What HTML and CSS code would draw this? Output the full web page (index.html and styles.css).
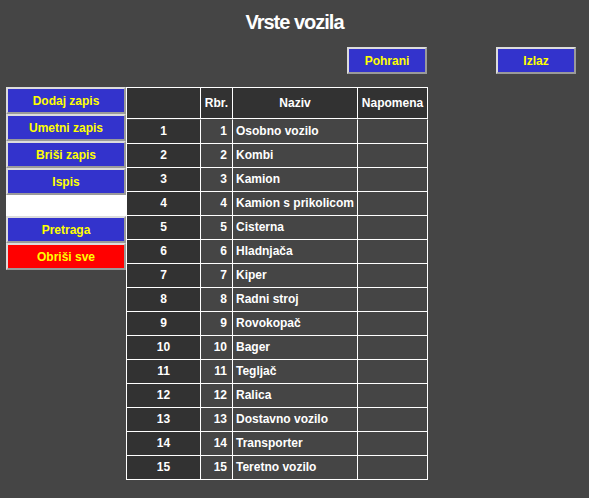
FILE: index.html
```html
<!DOCTYPE html>
<html lang="hr">
<head>
    <meta charset="UTF-8">
    <meta name="viewport" content="width=device-width, initial-scale=1.0">
    <title>Vrste vozila</title>
    <link rel="stylesheet" href="styles.css">
</head>
<body>
    <h1 class="title">Vrste vozila</h1>

    <div class="toolbar">
        <button class="btn btn-top">Pohrani</button>
        <button class="btn btn-top">Izlaz</button>
    </div>

    <div class="main">
        <div class="sidebar">
            <button class="btn btn-side">Dodaj zapis</button>
            <button class="btn btn-side">Umetni zapis</button>
            <button class="btn btn-side">Briši zapis</button>
            <button class="btn btn-side">Ispis</button>
            <input type="text" class="search">
            <button class="btn btn-side">Pretraga</button>
            <button class="btn btn-side btn-red">Obriši sve</button>
        </div>

        <table class="grid">
            <thead>
                <tr>
                    <th class="c-id"></th>
                    <th class="c-rbr">Rbr.</th>
                    <th class="c-naziv">Naziv</th>
                    <th class="c-nap">Napomena</th>
                </tr>
            </thead>
            <tbody>
                <tr><td class="c-id">1</td><td class="c-rbr">1</td><td class="c-naziv">Osobno vozilo</td><td></td></tr>
                <tr><td class="c-id">2</td><td class="c-rbr">2</td><td class="c-naziv">Kombi</td><td></td></tr>
                <tr><td class="c-id">3</td><td class="c-rbr">3</td><td class="c-naziv">Kamion</td><td></td></tr>
                <tr><td class="c-id">4</td><td class="c-rbr">4</td><td class="c-naziv">Kamion s prikolicom</td><td></td></tr>
                <tr><td class="c-id">5</td><td class="c-rbr">5</td><td class="c-naziv">Cisterna</td><td></td></tr>
                <tr><td class="c-id">6</td><td class="c-rbr">6</td><td class="c-naziv">Hladnjača</td><td></td></tr>
                <tr><td class="c-id">7</td><td class="c-rbr">7</td><td class="c-naziv">Kiper</td><td></td></tr>
                <tr><td class="c-id">8</td><td class="c-rbr">8</td><td class="c-naziv">Radni stroj</td><td></td></tr>
                <tr><td class="c-id">9</td><td class="c-rbr">9</td><td class="c-naziv">Rovokopač</td><td></td></tr>
                <tr><td class="c-id">10</td><td class="c-rbr">10</td><td class="c-naziv">Bager</td><td></td></tr>
                <tr><td class="c-id">11</td><td class="c-rbr">11</td><td class="c-naziv">Tegljač</td><td></td></tr>
                <tr><td class="c-id">12</td><td class="c-rbr">12</td><td class="c-naziv">Ralica</td><td></td></tr>
                <tr><td class="c-id">13</td><td class="c-rbr">13</td><td class="c-naziv">Dostavno vozilo</td><td></td></tr>
                <tr><td class="c-id">14</td><td class="c-rbr">14</td><td class="c-naziv">Transporter</td><td></td></tr>
                <tr><td class="c-id">15</td><td class="c-rbr">15</td><td class="c-naziv">Teretno vozilo</td><td></td></tr>
            </tbody>
        </table>
    </div>
</body>
</html>
```

FILE: styles.css
```css
html {
    background-color: #454545;
}
body {
    margin: 0;
    font-family: "Liberation Sans", Arial, sans-serif;
    font-size: 12px;
    font-weight: bold;
    color: #fff;
}
.title {
    margin: 10px 0 0;
    font-size: 20px;
    line-height: 24px;
    letter-spacing: -1px;
    text-align: center;
}
.toolbar {
    display: flex;
    justify-content: flex-end;
    gap: 69px;
    margin-top: 13px;
    padding-right: 13px;
}
.btn {
    box-sizing: border-box;
    height: 27px;
    padding: 0;
    border: 2px solid;
    border-color: #dcdcdc #9a9a9a #9a9a9a #dcdcdc;
    background-color: #3333cc;
    color: #ffff00;
    font-family: inherit;
    font-size: 12px;
    font-weight: bold;
    text-align: center;
    cursor: pointer;
}
.btn-top {
    width: 80px;
}
.btn-side {
    width: 120px;
}
.btn-red {
    background-color: #ff0000;
}
.main {
    display: flex;
    align-items: flex-start;
    margin-top: 13px;
    padding-left: 6px;
}
.sidebar {
    display: flex;
    flex-direction: column;
    width: 120px;
}
.search {
    box-sizing: border-box;
    width: 120px;
    height: 21px;
    margin: 0;
    border: none;
    background-color: #fff;
}
.grid {
    table-layout: fixed;
    width: 302px;
    border-collapse: separate;
    border-spacing: 0;
    border-top: 1px solid #fff;
    border-left: 1px solid #fff;
}
.grid th,
.grid td {
    box-sizing: border-box;
    padding: 0;
    border-right: 1px solid #fff;
    border-bottom: 1px solid #fff;
    white-space: nowrap;
    overflow: hidden;
}
.grid th {
    line-height: 30px;
    background-color: #323232;
    text-align: center;
}
.grid td {
    line-height: 23px;
    background-color: #454545;
}
.grid tbody tr:first-child td {
    border-top: 1px solid #454545;
}
.grid .c-id {
    width: 74px;
}
.grid .c-rbr {
    width: 32px;
}
.grid .c-naziv {
    width: 125px;
}
.grid .c-nap {
    width: 70px;
}
.grid td.c-id {
    background-color: #323232;
    text-align: center;
}
.grid td.c-rbr {
    padding-right: 5px;
    text-align: right;
}
.grid td.c-naziv {
    padding-left: 3px;
}
```
